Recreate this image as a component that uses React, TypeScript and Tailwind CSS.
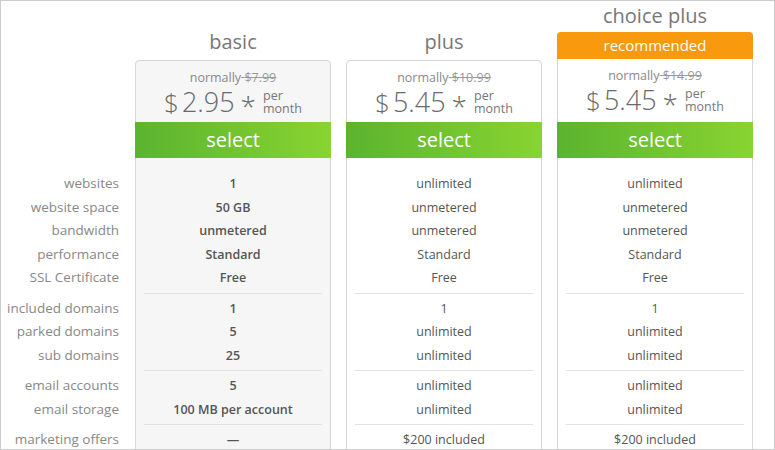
type Plan = {
  name: string;
  normally: string;
  price: string;
  recommended?: boolean;
  shaded?: boolean;
  groups: string[][];
};

const labels: string[][] = [
  ["websites", "website space", "bandwidth", "performance", "SSL Certificate"],
  ["included domains", "parked domains", "sub domains"],
  ["email accounts", "email storage"],
  ["marketing offers"],
];

const plans: Plan[] = [
  {
    name: "basic",
    normally: "$7.99",
    price: "2.95",
    shaded: true,
    groups: [
      ["1", "50 GB", "unmetered", "Standard", "Free"],
      ["1", "5", "25"],
      ["5", "100 MB per account"],
      ["—"],
    ],
  },
  {
    name: "plus",
    normally: "$10.99",
    price: "5.45",
    groups: [
      ["unlimited", "unmetered", "unmetered", "Standard", "Free"],
      ["1", "unlimited", "unlimited"],
      ["unlimited", "unlimited"],
      ["$200 included"],
    ],
  },
  {
    name: "choice plus",
    normally: "$14.99",
    price: "5.45",
    recommended: true,
    groups: [
      ["unlimited", "unmetered", "unmetered", "Standard", "Free"],
      ["1", "unlimited", "unlimited"],
      ["unlimited", "unlimited"],
      ["$200 included"],
    ],
  },
];

function RowGroup({ rows, className }: { rows: string[]; className: string }) {
  return (
    <div className="py-[3px]">
      {rows.map((r, i) => (
        <div key={i} className={`h-[23.5px] leading-[23.5px] whitespace-nowrap ${className}`}>
          {r}
        </div>
      ))}
    </div>
  );
}

function PlanCard({ plan }: { plan: Plan }) {
  return (
    <div className="w-[196px] shrink-0">
      <div
        className={`flex items-center justify-center text-[20px] text-[#777] ${
          plan.recommended ? "h-[31px] pb-[2px]" : "h-[59px] pt-[23px]"
        }`}
      >
        {plan.name}
      </div>
      <div
        className={`min-h-[520px] border border-[#d6d6d6] rounded-t-[4px] ${
          plan.shaded ? "bg-[#f6f6f6]" : "bg-white"
        }`}
      >
        {plan.recommended && (
          <div className="-mt-px -mx-px h-[27px] rounded-t-[4px] bg-[#f8990e] text-white text-[15px] flex items-center justify-center">
            recommended
          </div>
        )}
        <div className={`${plan.recommended ? "h-[63px]" : "h-[61px]"} flex flex-col items-center pt-[8px]`}>
          <div className="text-[12.5px] leading-[17px] text-[#8a8a8a]">
            normally
            <span className="line-through text-[#999]"> {plan.normally}</span>
          </div>
          <div className="flex items-center text-[#6a6a6a] font-light mt-[1px]">
            <span className="text-[26px] leading-[30px]">$</span>
            <span className="text-[27px] leading-[30px] ml-[3px]">{plan.price}</span>
            <span className="text-[28px] leading-[18px] ml-[6px] mt-[8px]">*</span>
            <span className="flex flex-col text-[12.5px] leading-[12px] ml-[7px] mt-[2px] font-normal text-[#777]">
              <span className="h-[13px]">per</span>
              <span className="h-[13px]">month</span>
            </span>
          </div>
        </div>
        <div className="-mx-px h-[36px] bg-gradient-to-r from-[#5ab42e] to-[#88d431] text-white text-[20px] flex items-center justify-center">
          select
        </div>
        <div className="pt-[11px] px-[8px]">
          {plan.groups.map((g, i) => (
            <div key={i} className={i > 0 ? "border-t border-[#e2e2e2]" : ""}>
              <RowGroup
                rows={g}
                className={`text-center text-[12.5px] text-[#555] ${plan.shaded ? "font-semibold" : ""}`}
              />
            </div>
          ))}
        </div>
      </div>
    </div>
  );
}

export default function App() {
  return (
    <div
      className="w-[775px] h-[450px] border border-[#cccccc] bg-white overflow-hidden"
      style={{ fontFamily: '"Open Sans", "Noto Sans", sans-serif' }}
    >
      <div className="flex items-start">
        <div className="w-[134px] shrink-0 pr-[16px] pt-[168px]">
          {labels.map((g, i) => (
            <div key={i} className={i > 0 ? "border-t border-transparent" : ""}>
              <RowGroup rows={g} className="text-right text-[13.5px] text-[#888]" />
            </div>
          ))}
        </div>
        <div className="flex gap-[15px]">
          {plans.map((p) => (
            <PlanCard key={p.name} plan={p} />
          ))}
        </div>
      </div>
    </div>
  );
}
